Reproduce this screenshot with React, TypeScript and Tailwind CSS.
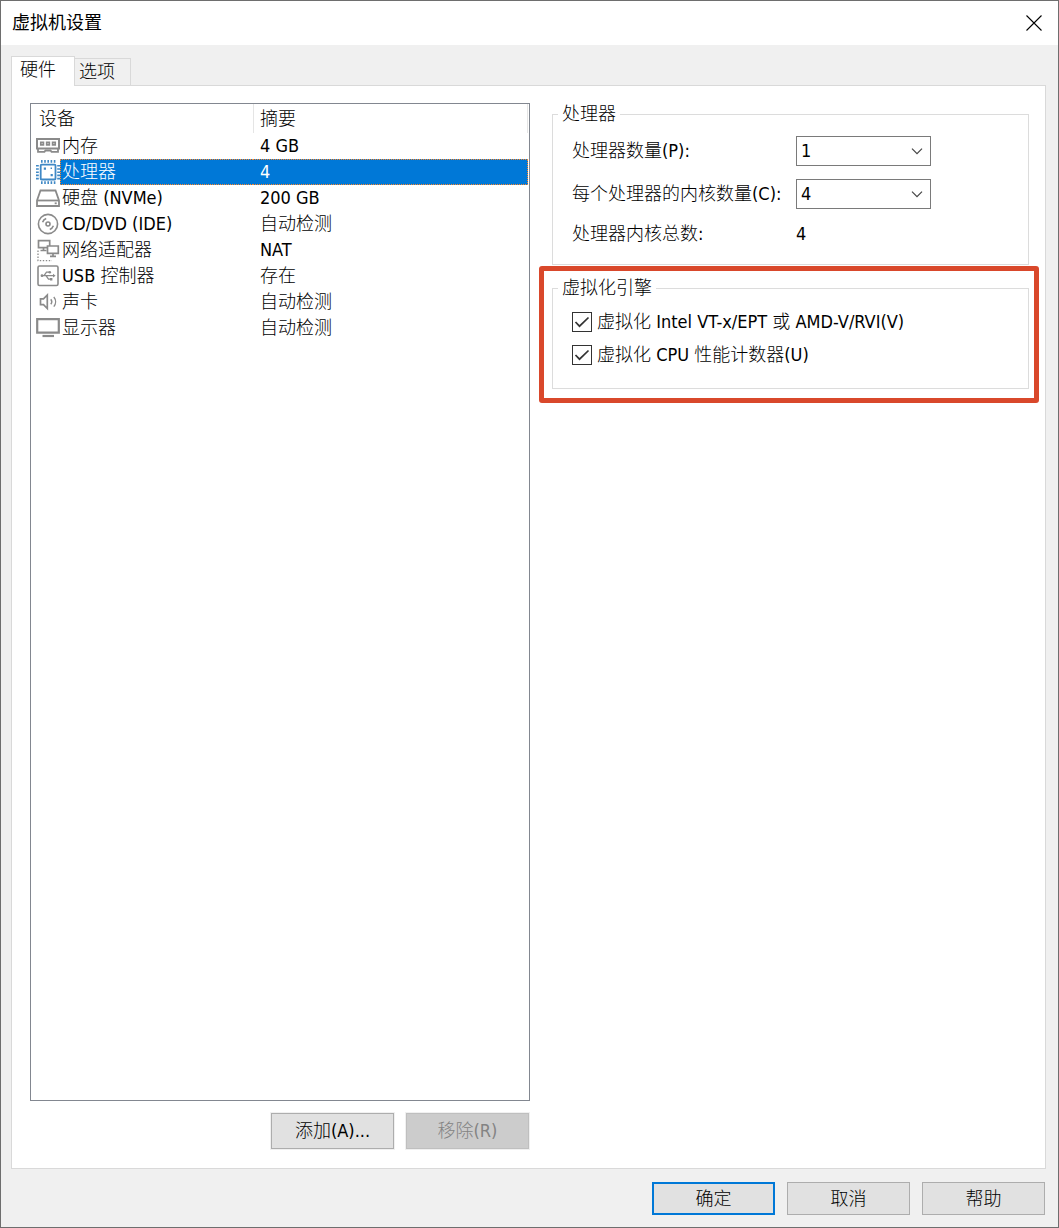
import { useState } from "react";
import type { ReactNode } from "react";

type Device = {
	id: string;
	name: string;
	summary: string;
	icon: ReactNode;
};

const devices: Device[] = [
	{
		id: "memory",
		name: "内存",
		summary: "4 GB",
		icon: (
			<g fill="none" stroke="#8a8a8a" strokeWidth="2">
				<path d="M6 6h22v9.5H6z" />
				<path d="M7 16v2.8h6.5l1-1.3h5l1 1.3H27V16" strokeWidth="1.8" />
				<path d="M9.8 9.3h2.6v2.6H9.8zM15.7 9.3h2.6v2.6h-2.6zM21.6 9.3h2.6v2.6h-2.6z" strokeWidth="1.7" />
			</g>
		),
	},
	{
		id: "cpu",
		name: "处理器",
		summary: "4",
		icon: (
			<g fill="none" stroke="#3f88c5">
				<rect x="9.7" y="5.7" width="14.8" height="14.8" rx="0.8" strokeWidth="1.8" />
				<path d="M10 2.4h15M10 23.6h15" strokeWidth="2.8" strokeDasharray="1.6 1.6" />
				<path d="M6.4 6v15M27.6 6v15" strokeWidth="2.8" strokeDasharray="1.6 1.6" />
				<path d="M12.8 8.6h2.2v2.2h-2.2zM19.6 8.6h1.4v1.4h-1.4zM19.6 15h2.2v2.2h-2.2z" fill="#3f88c5" stroke="none" />
			</g>
		),
	},
	{
		id: "disk",
		name: "硬盘 (NVMe)",
		summary: "200 GB",
		icon: (
			<g fill="none" stroke="#8a8a8a" strokeWidth="1.8">
				<path d="M6 15.5L9.5 5.5h15L28 15.5V21H6z" />
				<path d="M6 15.5h22" />
				<path d="M23.7 18.3h2" />
			</g>
		),
	},
	{
		id: "cd",
		name: "CD/DVD (IDE)",
		summary: "自动检测",
		icon: (
			<g fill="none" stroke="#8a8a8a" strokeWidth="1.6">
				<circle cx="17" cy="13" r="9.6" />
				<circle cx="17" cy="13" r="2" />
				<path d="M11.6 11.2a6 6 0 0 1 3.6-3.6M22.4 14.8a6 6 0 0 1-3.6 3.6" />
			</g>
		),
	},
	{
		id: "network",
		name: "网络适配器",
		summary: "NAT",
		icon: (
			<g fill="none" stroke="#8a8a8a" strokeWidth="1.7">
				<path d="M7.5 3.7h11.2v7H7.5z" />
				<path d="M12.5 10.7V13M9.5 13.5h6" />
				<path d="M16.5 9h10.8v7.3H16.5z" fill="#fff" />
				<path d="M22 16.5V19M19 19.3h6" />
				<path d="M7 13.5v10.2H21" strokeWidth="1.3" strokeDasharray="1.4 1.6" />
			</g>
		),
	},
	{
		id: "usb",
		name: "USB 控制器",
		summary: "存在",
		icon: (
			<g fill="none" stroke="#8a8a8a" strokeWidth="1.3">
				<rect x="7" y="3" width="20" height="19.5" rx="1.5" strokeWidth="1.6" />
				<path d="M10 12.7h13M13 12.7l2.5-3.5h3M15 12.7l2.5 3.5H20" />
				<circle cx="11" cy="12.7" r="1.4" fill="#8a8a8a" stroke="none" />
				<circle cx="18.8" cy="9.2" r="1.3" fill="#8a8a8a" stroke="none" />
				<path d="M19 15h2.4v2.4H19zM22 10.8l2.6 1.9-2.6 1.9z" fill="#8a8a8a" stroke="none" />
			</g>
		),
	},
	{
		id: "sound",
		name: "声卡",
		summary: "自动检测",
		icon: (
			<g fill="none" stroke="#8a8a8a" strokeWidth="1.7">
				<path d="M9.5 9.8h3L16.3 6v13.5l-3.8-3.8h-3z" />
				<path d="M19.8 10.2a4 4 0 0 1 0 5M22.8 8a7.5 7.5 0 0 1 0 9.6" strokeWidth="1.4" />
			</g>
		),
	},
	{
		id: "display",
		name: "显示器",
		summary: "自动检测",
		icon: (
			<g fill="none" stroke="#8a8a8a" strokeWidth="2.2">
				<path d="M6.2 4.2h21.6v13.4H6.2z" />
				<path d="M11.5 21h11.5" />
			</g>
		),
	},
];

function DeviceTable() {
	const [selected, setSelected] = useState("cpu");

	return (
		<div className="flex-1 border border-[#828790] bg-white pr-px">
			<table className="w-full table-fixed border-separate border-spacing-0 text-left">
				<thead>
					<tr>
						<th scope="col" className="h-[29px] w-[222px] p-0 pl-2 font-light">
							设备
						</th>
						<th scope="col" className="border-x border-[#e5e5e5] p-0 pl-[6px] font-light">
							摘要
						</th>
					</tr>
				</thead>
				<tbody>
					{devices.map((device) => {
						const active = device.id === selected;
						return (
							<tr key={device.id} aria-selected={active} onClick={() => setSelected(device.id)}>
								<td className="p-0">
									<div className="flex h-[26px]">
										<svg className="h-[26px] w-[29px] shrink-0" viewBox="0 0 29 26" aria-hidden="true">
											{device.icon}
										</svg>
										<span
											className={
												active
													? "flex flex-1 items-center border-y border-l border-dotted border-[#ff8728] bg-[#0078d7] pl-px text-white"
													: "flex flex-1 items-center pl-[2px]"
											}
										>
											{device.name}
										</span>
									</div>
								</td>
								<td
									className={
										active
											? "border-y border-r border-dotted border-[#ff8728] bg-[#0078d7] p-0 pl-[7px] text-white"
											: "p-0 pl-[7px]"
									}
								>
									{device.summary}
								</td>
							</tr>
						);
					})}
				</tbody>
			</table>
		</div>
	);
}

function CountSelect({ id, value, onChange }: { id: string; value: number; onChange: (n: number) => void }) {
	return (
		<div className="relative">
			<select
				id={id}
				value={value}
				onChange={(e) => onChange(Number(e.target.value))}
				className="block h-[30px] w-full appearance-none border border-[#7a7a7a] bg-white pl-1 outline-none"
			>
				{[1, 2, 4, 8].map((n) => (
					<option key={n} value={n}>
						{n}
					</option>
				))}
			</select>
			<svg
				className="pointer-events-none absolute right-2 top-3 h-[7px] w-[12px]"
				viewBox="0 0 12 7"
				fill="none"
				stroke="#444"
				strokeWidth="1.2"
				aria-hidden="true"
			>
				<path d="M1 0.7l5 5 5-5" />
			</svg>
		</div>
	);
}

function CheckRow({ label }: { label: string }) {
	return (
		<label className="flex items-center gap-[5px] leading-5">
			<span className="relative size-5 shrink-0">
				<input
					type="checkbox"
					defaultChecked
					className="peer block size-5 appearance-none border border-[#333] bg-white"
				/>
				<svg
					className="pointer-events-none absolute inset-0 hidden size-5 peer-checked:block"
					viewBox="0 0 20 20"
					fill="none"
					stroke="#333"
					strokeWidth="1.7"
					aria-hidden="true"
				>
					<path d="M3.5 10l4 4.2L16.5 5.5" />
				</svg>
			</span>
			{label}
		</label>
	);
}

export default function App() {
	const [processors, setProcessors] = useState(1);
	const [cores, setCores] = useState(4);

	return (
		<main className="flex min-h-screen flex-col border border-[#6e6e6e] bg-[#f0f0f0] font-['DejaVu_Sans_Condensed','Noto_Sans_CJK_SC',sans-serif] text-lg leading-6 font-light text-black">
			<header className="flex h-11 items-center justify-between bg-white pl-[11px] pr-4 font-normal">
				<h1>虚拟机设置</h1>
				<button type="button" aria-label="关闭">
					<svg className="size-4" viewBox="0 0 16 16" fill="none" stroke="#000" strokeWidth="1.1" aria-hidden="true">
						<path d="M0.5 0.5l15 15M15.5 0.5l-15 15" />
					</svg>
				</button>
			</header>

			<div className="flex flex-1 flex-col px-[10px] pt-[11px]">
				<div role="tablist" className="flex items-end">
					<button
						type="button"
						role="tab"
						aria-selected="true"
						className="relative -mb-px h-[30px] w-16 border border-b-0 border-[#d9d9d9] bg-white pb-1 pl-2 text-left"
					>
						硬件
					</button>
					<button
						type="button"
						role="tab"
						aria-selected="false"
						className="h-[27px] w-14 border border-b-0 border-l-0 border-[#d9d9d9] pl-1 text-left"
					>
						选项
					</button>
				</div>

				<div
					role="tabpanel"
					className="mr-[2px] grid flex-1 grid-cols-2 gap-[9px] border border-[#d9d9d9] bg-white pb-[19px] pl-[18px] pr-[6px] pt-[17px]"
				>
					<section className="flex flex-col gap-3">
						<DeviceTable />
						<div className="flex justify-end gap-3 pr-px">
							<button
								type="button"
								className="h-9 w-[123px] border border-[#adadad] bg-[#e1e1e1] ring-1 ring-[#f0f0f0]"
							>
								添加(A)...
							</button>
							<button
								type="button"
								disabled
								className="h-9 w-[123px] border border-[#bfbfbf] bg-[#cccccc] text-[#838383] ring-1 ring-[#f0f0f0]"
							>
								移除(R)
							</button>
						</div>
					</section>

					<section>
						<fieldset className="ml-[13px] mr-[10px] border border-[#dcdcdc] pb-[18px] pl-[19px] pt-[11px]">
							<legend className="-ml-[14px] px-1 leading-[22px]">处理器</legend>
							<div className="grid grid-cols-[224px_135px] items-center gap-y-[13px]">
								<label htmlFor="processors">处理器数量(P):</label>
								<CountSelect id="processors" value={processors} onChange={setProcessors} />
								<label htmlFor="cores">每个处理器的内核数量(C):</label>
								<CountSelect id="cores" value={cores} onChange={setCores} />
								<span>处理器内核总数:</span>
								<output htmlFor="processors cores">{processors * cores}</output>
							</div>
						</fieldset>

						<div className="mt-px rounded-[3px] border-[5px] border-[#d9482b] pb-[9px] pl-2 pr-[5px] pt-[6px]">
							<fieldset className="flex flex-col gap-[13px] border border-[#dcdcdc] pb-[23px] pl-[19px] pt-[13px]">
								<legend className="-ml-[14px] px-1 leading-[22px]">虚拟化引擎</legend>
								<CheckRow label="虚拟化 Intel VT-x/EPT 或 AMD-V/RVI(V)" />
								<CheckRow label="虚拟化 CPU 性能计数器(U)" />
							</fieldset>
						</div>
					</section>
				</div>
			</div>

			<footer className="flex justify-end gap-3 px-[13px] pb-3 pt-[13px]">
				<button type="button" className="h-[33px] w-[123px] border-2 border-[#0078d7] bg-[#e1e1e1]">
					确定
				</button>
				<button type="button" className="h-[33px] w-[123px] border border-[#adadad] bg-[#e1e1e1]">
					取消
				</button>
				<button type="button" className="h-[33px] w-[123px] border border-[#adadad] bg-[#e1e1e1]">
					帮助
				</button>
			</footer>
		</main>
	);
}
